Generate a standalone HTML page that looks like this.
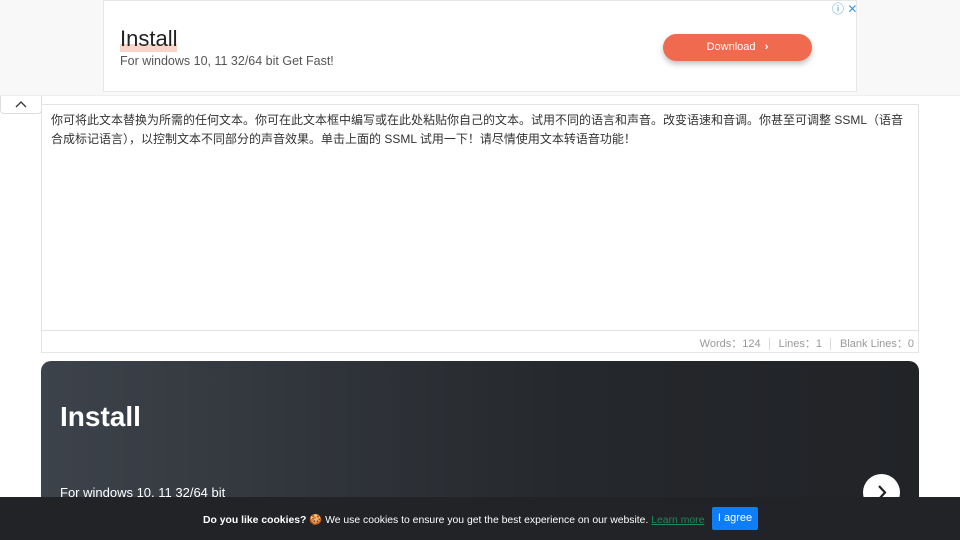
<!DOCTYPE html>
<html><head><meta charset="utf-8"><style>
*{box-sizing:border-box;margin:0;padding:0}
html,body{width:960px;height:540px;overflow:hidden}
body{background:#fff;font-family:"Liberation Sans","Noto Sans CJK SC",sans-serif;position:relative}
.top{position:absolute;left:0;top:0;width:960px;height:96px;background:#f8f8f8;border-bottom:1px solid #eee}
.ad{position:absolute;left:103px;top:0;width:754px;height:92px;background:#fff;border:1px solid #e6e6e6}
.ad h1{position:absolute;left:16px;top:25px;font-size:22px;font-weight:normal;color:#222;background:linear-gradient(transparent 70%,#f9d4c8 70%);line-height:26px}
.ad p{position:absolute;left:16px;top:53px;font-size:12.5px;color:#555}
.btn{position:absolute;left:559px;top:33px;width:149px;height:27px;border-radius:14px;background:#ef6a4f;color:#fff;font-size:11px;text-align:center;line-height:27px;box-shadow:0 3px 6px rgba(0,0,0,.25)}
.ic{position:absolute;left:832px;top:0px;font-size:12px;color:#3a9ad9}
.tab{position:absolute;left:0;top:96px;width:42px;height:18px;background:#fff;border:1px solid #ddd;border-top:none;border-radius:0 0 4px 4px}
.ta{position:absolute;left:41px;top:104px;width:878px;height:227px;border:1px solid #e2e2e2;background:#fff;padding:6px 9px;font-size:12px;line-height:19px;color:#333}
.cnt{position:absolute;left:41px;top:330px;width:878px;height:23px;border:1px solid #e6e6e6;border-top:none;font-size:11px;color:#999;text-align:right;padding:5px 4px 0 0}
.cnt span{border-left:1px solid #ddd;padding-left:9px;margin-left:8px}
.card{position:absolute;left:41px;top:361px;width:878px;height:200px;border-radius:10px;background:linear-gradient(90deg,#3d434b,#25282c 60%,#212327)}
.card h2{position:absolute;left:19px;top:40px;color:#fff;font-size:28px}
.card p{position:absolute;left:19px;top:124px;color:#fff;font-size:13px}
.circ{position:absolute;left:822px;top:113px;width:37px;height:37px;border-radius:50%;background:#fff}
.ck{position:absolute;left:0;top:497px;width:960px;height:43px;background:#222326;color:#fff;font-size:10.4px}
.ck .t{position:absolute;left:203px;top:16px;white-space:nowrap}
.ck a{color:#1f8a5a;text-decoration:underline}
.ag{position:absolute;left:712px;top:507px;width:46px;height:23px;background:#0d7ef7;color:#fff;border-radius:2px;font-size:11px;text-align:center;line-height:23px}
</style></head><body>
<div class="top"></div>
<div class="ad"><h1>Install</h1><p>For windows 10, 11 32/64 bit Get Fast!</p>
<div class="btn">Download &nbsp;&nbsp;<b>›</b></div></div>
<div class="ic">ⓘ ✕</div>
<div class="tab"><svg width="42" height="16"><path d="M15 11l5-5 5 5" fill="none" stroke="#333" stroke-width="1.3"/></svg></div>
<div class="ta">你可将此文本替换为所需的任何文本。你可在此文本框中编写或在此处粘贴你自己的文本。试用不同的语言和声音。改变语速和音调。你甚至可调整 SSML（语音合成标记语言），以控制文本不同部分的声音效果。单击上面的 SSML 试用一下！请尽情使用文本转语音功能！</div>
<div class="cnt">Words：124<span>Lines：1</span><span>Blank Lines：0</span></div>
<div class="card"><h2>Install</h2><p>For windows 10, 11 32/64 bit</p><div class="circ"><svg width="37" height="37"><path d="M16 12l6 6.5-6 6.5" fill="none" stroke="#222" stroke-width="2.2"/></svg></div></div>
<div class="ck"><div class="t"><b>Do you like cookies?</b> 🍪 We use cookies to ensure you get the best experience on our website. <a>Learn more</a></div></div>
<div class="ag">I agree</div>
</body></html>
